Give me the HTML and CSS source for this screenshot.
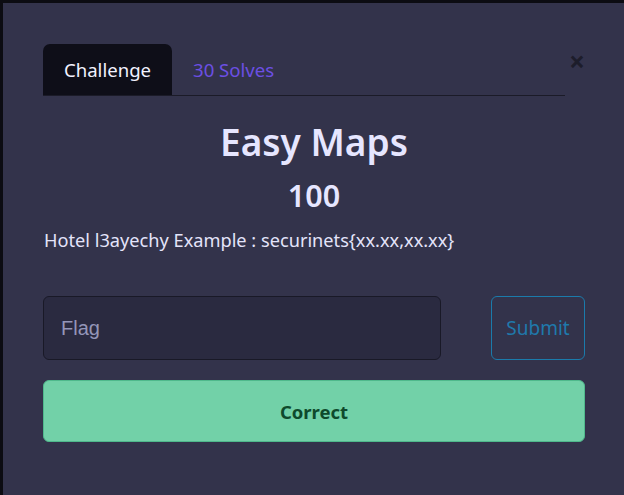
FILE: index.html
```html
<!DOCTYPE html>
<html>
<head>
<meta charset="utf-8">
<link rel="stylesheet" href="styles.css">
</head>
<body>
<div class="modal">
  <div class="head">
    <ul class="tabs">
      <li class="tab active">Challenge</li>
      <li class="tab">30 Solves</li>
    </ul>
    <span class="close">&times;</span>
  </div>
  <h2 class="title">Easy Maps</h2>
  <h3 class="points">100</h3>
  <p class="desc">Hotel l3ayechy Example : securinets{xx.xx,xx.xx}</p>
  <form class="row">
    <input class="flag" type="text" placeholder="Flag">
    <button class="submit" type="button">Submit</button>
  </form>
  <div class="result">Correct</div>
</div>
</body>
</html>
```
FILE: styles.css
```css
html, body {
  margin: 0;
  padding: 0;
  background: #0c0c12;
  height: 100%;
  overflow: hidden;
}
body {
  font-family: "Noto Sans", "Open Sans", sans-serif;
  color: #e4e4fa;
}
.modal {
  margin: 3px 0 0 3px;
  width: 622px;
  height: 500px;
  box-sizing: border-box;
  background: #33334b;
  padding: 41px 40px 0 40px;
}
.head {
  display: flex;
  align-items: flex-start;
}
.tabs {
  list-style: none;
  margin: 0;
  padding: 0;
  display: flex;
  width: 522px;
  flex-shrink: 0;
  border-bottom: 1px solid #1b1b28;
}
.tab {
  height: 51px;
  box-sizing: border-box;
  padding: 0 21px;
  display: flex;
  align-items: center;
  font-size: 18.6px;
  color: #6c4fe3;
  border-radius: 7px 7px 0 0;
}
.tab.active {
  background: #0e0e18;
  color: #f2f2ff;
  width: 129px;
  justify-content: center;
  padding: 0;
}
.close {
  flex-shrink: 0;
  margin-left: 3px;
  margin-top: 2px;
  font-size: 28px;
  line-height: 30px;
  font-weight: 700;
  color: #1d1d2b;
  width: 18px;
  text-align: center;
}
.title {
  margin: 21px 0 0;
  text-align: center;
  font-size: 37px;
  font-weight: 600;
  line-height: 50px;
  color: #e6e6ff;
}
.points {
  margin: 8px 0 0;
  text-align: center;
  font-size: 30.5px;
  font-weight: 600;
  line-height: 40px;
  color: #e6e6ff;
}
.desc {
  margin: 12px 0 0 1px;
  font-size: 18.2px;
  line-height: 26px;
  color: #e4e4fa;
}
.row {
  margin: 43px 0 0;
  display: flex;
  justify-content: space-between;
}
.flag {
  width: 398px;
  height: 64px;
  box-sizing: border-box;
  background: #2a2a40;
  border: 1px solid #191927;
  border-radius: 6px;
  padding: 0 17px;
  font-family: "Liberation Sans", Arial, sans-serif;
  font-size: 20px;
  color: #e4e4fa;
  outline: none;
}
.flag::placeholder {
  color: #9496b8;
}
.submit {
  width: 94px;
  height: 64px;
  box-sizing: border-box;
  background: transparent;
  border: 1px solid #1b7bab;
  border-radius: 6px;
  font-family: "Noto Sans", "Open Sans", sans-serif;
  font-size: 19px;
  color: #1f79ab;
  padding: 0;
}
.result {
  margin-top: 20px;
  height: 62px;
  box-sizing: border-box;
  background: #72d1a8;
  border: 1px solid #4fb98c;
  border-radius: 6px;
  display: flex;
  align-items: center;
  justify-content: center;
  font-size: 18.5px;
  font-weight: 700;
  color: #0e4a2c;
}
```
